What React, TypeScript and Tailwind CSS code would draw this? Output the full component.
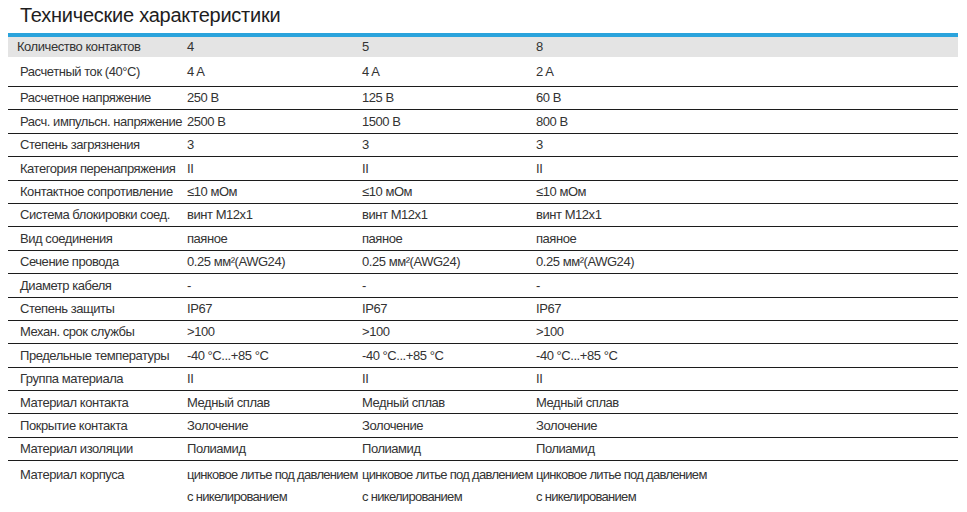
const font = { fontFamily: '"Liberation Sans", Arial, sans-serif' }

type Row = { label: string; values: string[] }

const rows: Row[] = [
  { label: 'Расчетный ток (40°C)', values: ['4 A', '4 A', '2 A'] },
  { label: 'Расчетное напряжение', values: ['250 B', '125 B', '60 B'] },
  { label: 'Расч. импульсн. напряжение', values: ['2500 B', '1500 B', '800 B'] },
  { label: 'Степень загрязнения', values: ['3', '3', '3'] },
  { label: 'Категория перенапряжения', values: ['II', 'II', 'II'] },
  { label: 'Контактное сопротивление', values: ['≤10 мОм', '≤10 мОм', '≤10 мОм'] },
  { label: 'Система блокировки соед.', values: ['винт M12x1', 'винт M12x1', 'винт M12x1'] },
  { label: 'Вид соединения', values: ['паяное', 'паяное', 'паяное'] },
  { label: 'Сечение провода', values: ['0.25 мм²(AWG24)', '0.25 мм²(AWG24)', '0.25 мм²(AWG24)'] },
  { label: 'Диаметр кабеля', values: ['-', '-', '-'] },
  { label: 'Степень защиты', values: ['IP67', 'IP67', 'IP67'] },
  { label: 'Механ. срок службы', values: ['>100', '>100', '>100'] },
  { label: 'Предельные температуры', values: ['-40 °C...+85 °C', '-40 °C...+85 °C', '-40 °C...+85 °C'] },
  { label: 'Группа материала', values: ['II', 'II', 'II'] },
  { label: 'Материал контакта', values: ['Медный сплав', 'Медный сплав', 'Медный сплав'] },
  { label: 'Покрытие контакта', values: ['Золочение', 'Золочение', 'Золочение'] },
  { label: 'Материал изоляции', values: ['Полиамид', 'Полиамид', 'Полиамид'] },
]

const grid = 'grid grid-cols-[179px_175px_174px_1fr]'

export default function App() {
  return (
    <div className="w-[967px] h-[512px] bg-white text-[#333333] overflow-hidden" style={font}>
      <h2 className="pl-[20px] pt-[3px] h-[33px] text-[20px] leading-[24px] tracking-[-0.25px] text-[#1e1e1e]">
        Технические характеристики
      </h2>
      <div className="ml-[8px] w-[950px] text-[13px] tracking-[-0.45px]">
        <div className="h-[4px] bg-[#2aa3dc]" />
        <div className={`${grid} h-[20px] items-center bg-[#e4e4e4]`}>
          <div className="pl-[9px]">Количество контактов</div>
          <div>4</div>
          <div>5</div>
          <div>8</div>
        </div>
        {rows.map((row, i) => (
          <div
            key={row.label}
            className={`${grid} items-center border-b border-[#1c1c1c] ${i === 0 ? 'h-[30px]' : 'h-[23.4px]'}`}
          >
            <div className="pl-[12px] whitespace-nowrap">{row.label}</div>
            {row.values.map((v, j) => (
              <div key={j} className="whitespace-nowrap">{v}</div>
            ))}
          </div>
        ))}
        <div className={`${grid} pt-[3px] leading-[22px]`}>
          <div className="pl-[12px]">Материал корпуса</div>
          {[0, 1, 2].map((j) => (
            <div key={j} className="whitespace-nowrap tracking-[-0.7px]">
              цинковое литье под давлением
              <br />с никелированием
            </div>
          ))}
        </div>
      </div>
    </div>
  )
}
